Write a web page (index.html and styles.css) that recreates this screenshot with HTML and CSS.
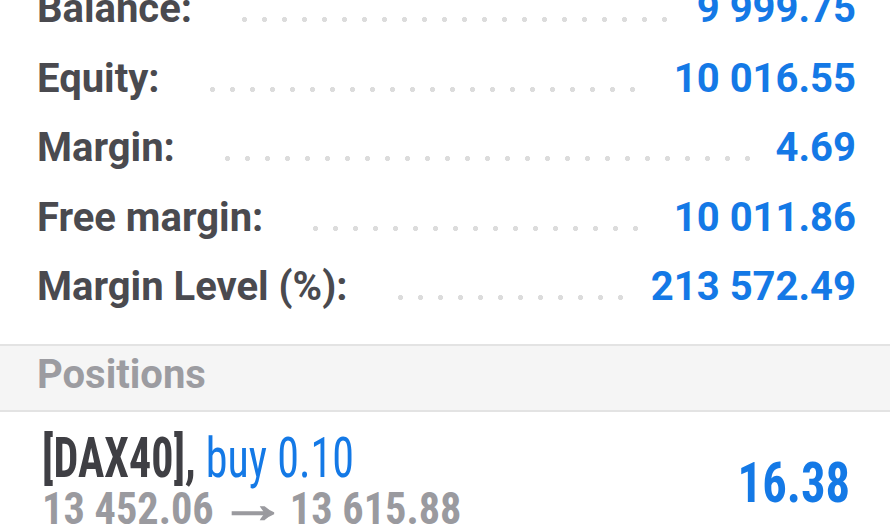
FILE: index.html
```html
<!DOCTYPE html>
<html lang="en">
<head>
  <meta charset="UTF-8">
  <meta name="viewport" content="width=device-width, initial-scale=1.0">
  <title>Trade</title>
  <link rel="stylesheet" href="styles.css">
</head>
<body>
  <section class="summary">
    <div class="summary__row">
      <span class="summary__label">Balance:</span>
      <span class="summary__dots"></span>
      <span class="summary__value">9 999.75</span>
    </div>
    <div class="summary__row">
      <span class="summary__label">Equity:</span>
      <span class="summary__dots"></span>
      <span class="summary__value">10 016.55</span>
    </div>
    <div class="summary__row">
      <span class="summary__label">Margin:</span>
      <span class="summary__dots"></span>
      <span class="summary__value">4.69</span>
    </div>
    <div class="summary__row">
      <span class="summary__label">Free margin:</span>
      <span class="summary__dots"></span>
      <span class="summary__value">10 011.86</span>
    </div>
    <div class="summary__row">
      <span class="summary__label">Margin Level (%):</span>
      <span class="summary__dots"></span>
      <span class="summary__value">213 572.49</span>
    </div>
  </section>

  <div class="group-header">Positions</div>

  <section class="position">
    <div class="position__info">
      <div class="position__title"><span class="position__symbol">[DAX40],</span> <span class="position__type">buy 0.10</span></div>
      <div class="position__prices">13 452.06<span class="position__arrow">→</span>13 615.88</div>
    </div>
    <div class="position__profit">16.38</div>
  </section>
</body>
</html>
```

FILE: styles.css
```css
* {
  margin: 0;
  padding: 0;
  box-sizing: border-box;
}

body {
  background: #fff;
  font-family: Roboto, "Noto Sans", sans-serif;
  overflow: hidden;
}

/* Account summary */

.summary {
  margin-top: -26px;
  padding: 0 34px 0 37px;
}

.summary__row {
  display: flex;
  align-items: baseline;
  height: 69.5px;
  line-height: 69.5px;
  font-size: 40px;
  font-weight: 700;
}

.summary__label {
  color: #4a4a4f;
  white-space: nowrap;
}

.summary__dots {
  flex: 1;
  display: inline-block;
  height: 5px;
  margin: 0 25px 2px 50px;
  background-image: radial-gradient(circle at 2.5px 2.5px, #dcdcdc 2.3px, transparent 2.9px);
  background-size: 20px 5px;
  background-repeat: repeat-x;
}

.summary__value {
  color: #1479e6;
  white-space: nowrap;
}

/* Group header */

.group-header {
  margin-top: 22px;
  height: 68px;
  line-height: 58px;
  padding-left: 37px;
  background: #f5f5f5;
  border-top: 2px solid #e3e3e3;
  border-bottom: 2px solid #e3e3e3;
  color: #9c9ca1;
  font-size: 40px;
  font-weight: 700;
}

/* Position row (narrow type, squeezed a bit more than Roboto Condensed) */

.position {
  display: flex;
  align-items: center;
  justify-content: space-between;
  padding: 21px 40px 0 42px;
  white-space: nowrap;
  font-family: "Roboto Condensed", Roboto, sans-serif;
  font-stretch: condensed;
}

.position__title {
  font-size: 55px;
  line-height: 50px;
  transform: scaleX(0.8);
  transform-origin: left center;
}

.position__symbol {
  color: #3f3f44;
  font-weight: 700;
}

.position__type {
  color: #1479e6;
}

.position__prices {
  font-size: 45px;
  line-height: 51px;
  font-weight: 700;
  color: #9a9a9f;
  transform: scaleX(0.94);
  transform-origin: left center;
}

.position__arrow {
  display: inline-block;
  margin: 0 17px 0 19px;
  font-family: Roboto, sans-serif;
  font-stretch: normal;
  font-weight: 700;
  -webkit-text-stroke: 1.6px currentColor;
  transform: scale(1.6, 1.15) translateY(-4px);
}

.position__profit {
  font-size: 55px;
  font-weight: 700;
  color: #1479e6;
  transform: scaleX(0.885);
  transform-origin: right center;
}
```
